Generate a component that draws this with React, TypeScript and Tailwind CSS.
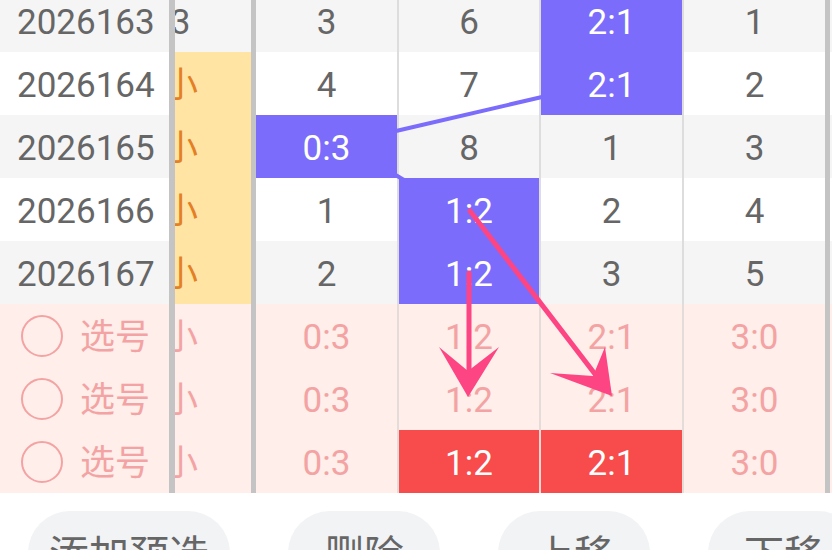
import React from 'react';

type Tone = 'gray' | 'white' | 'pink';

interface Cell {
  text: string;
  kind?: 'purple' | 'red';
}

interface Row {
  issue?: string;
  tone: Tone;
  side: string;
  sideYellow?: boolean;
  cells: Cell[];
}

const rows: Row[] = [
  { issue: '2026163', tone: 'gray', side: '3', cells: [{ text: '3' }, { text: '6' }, { text: '2:1', kind: 'purple' }, { text: '1' }] },
  { issue: '2026164', tone: 'white', side: '小', sideYellow: true, cells: [{ text: '4' }, { text: '7' }, { text: '2:1', kind: 'purple' }, { text: '2' }] },
  { issue: '2026165', tone: 'gray', side: '小', sideYellow: true, cells: [{ text: '0:3', kind: 'purple' }, { text: '8' }, { text: '1' }, { text: '3' }] },
  { issue: '2026166', tone: 'white', side: '小', sideYellow: true, cells: [{ text: '1' }, { text: '1:2', kind: 'purple' }, { text: '2' }, { text: '4' }] },
  { issue: '2026167', tone: 'gray', side: '小', sideYellow: true, cells: [{ text: '2' }, { text: '1:2', kind: 'purple' }, { text: '3' }, { text: '5' }] },
  { tone: 'pink', side: '小', cells: [{ text: '0:3' }, { text: '1:2' }, { text: '2:1' }, { text: '3:0' }] },
  { tone: 'pink', side: '小', cells: [{ text: '0:3' }, { text: '1:2' }, { text: '2:1' }, { text: '3:0' }] },
  { tone: 'pink', side: '小', cells: [{ text: '0:3' }, { text: '1:2', kind: 'red' }, { text: '2:1', kind: 'red' }, { text: '3:0' }] },
];

const toneBg: Record<Tone, string> = {
  gray: 'bg-[#f5f5f5]',
  white: 'bg-white',
  pink: 'bg-[#ffeee9]',
};

// widths include the 2px right border of each cell
const cellWidths = ['w-[143px]', 'w-[142px]', 'w-[143px]', 'w-[141px]'];

const TableRow: React.FC<{ row: Row }> = ({ row }) => {
  const pink = row.tone === 'pink';
  const bg = toneBg[row.tone];

  return (
    <div className="flex h-[63px]">
      <div className={`flex w-[169px] items-center ${bg}`}>
        {row.issue ? (
          <span className="pl-[17px] pt-[6px] text-[35px] text-[#666]">{row.issue}</span>
        ) : (
          <div className="flex items-center pl-[21px]">
            <span className="h-[42px] w-[42px] rounded-full border-[2.5px] border-[#f3a3a3]" />
            <span className="ml-[17px] pt-[6px] text-[35px] text-[#f3a3a3]">选号</span>
          </div>
        )}
      </div>
      <div className="w-[6px] bg-[#c4c4c4]" />
      <div className={`w-[76px] overflow-hidden ${row.sideYellow ? 'bg-[#ffe4a3]' : bg}`}>
        <div
          className={`-ml-[65px] flex h-full w-[141px] items-center justify-center pt-[6px] text-[35px] ${
            pink ? 'text-[#f3a3a3]' : row.sideYellow ? 'text-[#e47f24]' : 'text-[#666]'
          }`}
        >
          {row.side}
        </div>
      </div>
      <div className="w-[5px] bg-[#c4c4c4]" />
      {row.cells.map((cell, i) => {
        const last = i === row.cells.length - 1;
        let cls = `${bg} ${pink ? 'text-[#f3a3a3]' : 'text-[#666]'}`;
        if (cell.kind === 'purple') cls = 'bg-[#7b6cfc] text-white';
        if (cell.kind === 'red') cls = 'bg-[#f84b4b] text-white';
        const border = last
          ? ''
          : cell.kind === 'red' && i === 1
          ? 'border-r-2 border-[#ffd6d2]'
          : pink
          ? 'border-r-2 border-[#e4dcd9]'
          : 'border-r-2 border-[#dddddd]';
        return (
          <div
            key={i}
            className={`flex items-center justify-center pt-[6px] text-[35px] ${cellWidths[i]} ${border} ${cls}`}
          >
            {cell.text}
          </div>
        );
      })}
      <div className="w-[5px] bg-[#c4c4c4]" />
      <div className={`flex-1 ${bg}`} />
    </div>
  );
};

const Overlay: React.FC = () => (
  <svg
    className="pointer-events-none absolute left-0 top-0"
    width={832}
    height={550}
    viewBox="0 0 832 550"
  >
    <line x1={396} y1={131} x2={542} y2={97} stroke="#7b6cfc" strokeWidth={4} />
    <line x1={394} y1={174} x2={404} y2={180} stroke="#7b6cfc" strokeWidth={4} />

    <line x1={469} y1={273} x2={469} y2={378} stroke="#fd4584" strokeWidth={5} strokeLinecap="round" />
    <polygon points="468,397 439,347 468,371 499,347" fill="#fd4584" />

    <line x1={470} y1={211} x2={598} y2={378} stroke="#fd4584" strokeWidth={5} strokeLinecap="round" />
    <polygon points="612,396 550,373 593,376 605,347" fill="#fd4584" />
  </svg>
);

const buttons = [
  { label: '添加预选', w: 'w-[202px]' },
  { label: '删除', w: 'w-[152px]' },
  { label: '上移', w: 'w-[152px]' },
  { label: '下移', w: 'w-[152px]' },
];

export default function App() {
  return (
    <div className="relative h-[550px] w-[832px] overflow-hidden bg-white font-['Roboto','Noto_Sans_CJK_SC',sans-serif]">
      <div className="-mt-[11px]">
        {rows.map((row, i) => (
          <TableRow key={i} row={row} />
        ))}
      </div>
      <div className="flex gap-[58px] pl-[28px] pt-[18px]">
        {buttons.map((b) => (
          <div
            key={b.label}
            className={`flex h-[84px] shrink-0 items-center justify-center rounded-[42px] bg-[#f2f3f5] pt-[6px] text-[40px] text-[#666] ${b.w}`}
          >
            {b.label}
          </div>
        ))}
      </div>
      <Overlay />
    </div>
  );
}
